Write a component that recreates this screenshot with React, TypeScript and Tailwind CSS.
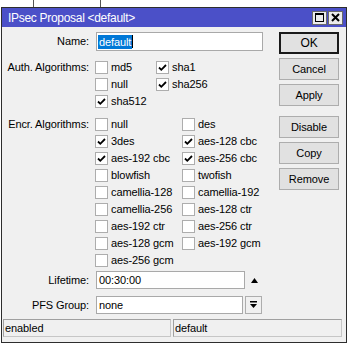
import React from "react";

const auth: [string, boolean][] = [
  ["md5", false],
  ["sha1", true],
  ["null", false],
  ["sha256", true],
  ["sha512", true],
];

const encr: [string, boolean][] = [
  ["null", false],
  ["des", false],
  ["3des", true],
  ["aes-128 cbc", true],
  ["aes-192 cbc", true],
  ["aes-256 cbc", true],
  ["blowfish", false],
  ["twofish", false],
  ["camellia-128", false],
  ["camellia-192", false],
  ["camellia-256", false],
  ["aes-128 ctr", false],
  ["aes-192 ctr", false],
  ["aes-256 ctr", false],
  ["aes-128 gcm", false],
  ["aes-192 gcm", false],
  ["aes-256 gcm", false],
];

const Check = ({ label, checked }: { label: string; checked: boolean }) => (
  <div className="flex items-center h-[17px]">
    <span className="w-[13px] h-[13px] border border-[#adadad] bg-white flex items-center justify-center shrink-0">
      {checked && (
        <svg width="11" height="11" viewBox="0 0 11 11">
          <path d="M2 5.5 L4.3 7.8 L9 3" fill="none" stroke="#000" strokeWidth="1.8" />
        </svg>
      )}
    </span>
    <span className="ml-[3px] whitespace-nowrap">{label}</span>
  </div>
);

const Btn = ({ children, def }: { children: React.ReactNode; def?: boolean }) => (
  <div
    className={
      "h-[22px] w-[60px] flex items-center justify-center bg-[#e1e1e1] " +
      (def ? "border-2 border-[#1a1a1a]" : "border border-[#adadad]")
    }
  >
    {children}
  </div>
);

const Label = ({ children }: { children: React.ReactNode }) => (
  <div className="w-[88px] text-right pr-[1px] shrink-0">{children}</div>
);

export default function App() {
  return (
    <div className="w-[350px] h-[345px] bg-white relative overflow-hidden font-['Liberation_Sans',Arial,sans-serif] text-[11px] text-black tracking-[-0.1px]">
      <div className="absolute left-[33px] top-0 w-px h-[7px] bg-[#555]" />
      <div className="absolute left-[100px] top-0 w-px h-[7px] bg-[#555]" />
      <div className="absolute left-[1px] top-[7px] w-[346px] h-[336px] border border-[#2d2d2d] bg-[#f0f0f0] flex flex-col">
        {/* title bar */}
        <div className="h-[19px] bg-[#4b50c8] flex items-center pl-[6px] pr-[3px] shrink-0">
          <span className="text-white text-[12px] tracking-[-0.3px]">IPsec Proposal &lt;default&gt;</span>
          <div className="ml-auto flex gap-[1px]">
            <div className="w-[15px] h-[14px] bg-[#ececec] border border-[#6a6a6a] flex items-center justify-center">
              <svg width="9" height="9" viewBox="0 0 9 9">
                <rect x="0.5" y="0.5" width="8" height="8" fill="none" stroke="#000" />
                <rect x="0" y="0" width="9" height="2" fill="#000" />
              </svg>
            </div>
            <div className="w-[15px] h-[14px] bg-[#ececec] border border-[#6a6a6a] flex items-center justify-center">
              <svg width="9" height="9" viewBox="0 0 9 9">
                <path d="M1 1 L8 8 M8 1 L1 8" stroke="#000" strokeWidth="2" />
              </svg>
            </div>
          </div>
        </div>

        {/* body */}
        <div className="flex flex-1">
          <div className="flex flex-col w-[276px] pt-[5px]">
            <div className="flex items-center h-[19px]">
              <Label>Name:</Label>
              <div className="ml-[6px] w-[167px] h-[19px] border border-[#a9a9a9] bg-white flex items-center pl-[1px]">
                <span className="bg-[#0078d7] text-white px-[1px] leading-[14px]">default</span>
                <span className="w-px h-[13px] bg-black" />
              </div>
            </div>

            <div className="flex mt-[8px]">
              <Label>
                <div className="h-[17px] flex items-center justify-end">Auth. Algorithms:</div>
              </Label>
              <div className="ml-[5px] grid grid-cols-[61px_auto]">
                {auth.map(([l, c], i) => (
                  <Check key={i} label={l} checked={c} />
                ))}
              </div>
            </div>

            <div className="flex mt-[6px]">
              <Label>
                <div className="h-[17px] flex items-center justify-end">Encr. Algorithms:</div>
              </Label>
              <div className="ml-[5px] grid grid-cols-[87px_auto]">
                {encr.map(([l, c], i) => (
                  <Check key={i} label={l} checked={c} />
                ))}
              </div>
            </div>

            <div className="flex items-center h-[18px] mt-[2px]">
              <Label>Lifetime:</Label>
              <div className="ml-[6px] w-[149px] h-[18px] border border-[#a9a9a9] bg-white flex items-center pl-[2px]">
                00:30:00
              </div>
              <svg className="ml-[6px]" width="7" height="5" viewBox="0 0 7 5">
                <path d="M3.5 0 L7 5 L0 5 Z" fill="#000" />
              </svg>
            </div>

            <div className="flex items-center h-[18px] mt-[7px]">
              <Label>PFS Group:</Label>
              <div className="ml-[6px] w-[147px] h-[18px] border border-[#a9a9a9] bg-white flex items-center pl-[2px]">
                none
              </div>
              <div className="ml-[2px] w-[17px] h-[18px] border border-[#adadad] bg-[#f0f0f0] flex items-center justify-center">
                <svg width="9" height="8" viewBox="0 0 9 8">
                  <rect x="1" y="0" width="7" height="1.5" fill="#000" />
                  <path d="M1 3 L8 3 L4.5 7 Z" fill="#000" />
                </svg>
              </div>
            </div>
          </div>

          <div className="flex flex-col pt-[5px] ml-[1px]">
            <Btn def>
              <span className="text-[12px]">OK</span>
            </Btn>
            <div className="flex flex-col gap-[4px] mt-[4px]">
              <Btn>Cancel</Btn>
              <Btn>Apply</Btn>
            </div>
            <div className="flex flex-col gap-[4px] mt-[10px]">
              <Btn>Disable</Btn>
              <Btn>Copy</Btn>
              <Btn>Remove</Btn>
            </div>
          </div>
        </div>

        {/* status bar */}
        <div className="flex h-[18px] mx-[1px] mb-[5px] gap-[2px] shrink-0">
          <div className="w-[168px] border border-[#c6c6c6] border-t-[#a0a0a0] border-l-[#a0a0a0] flex items-center pl-[1px]">
            enabled
          </div>
          <div className="w-[169px] border border-[#c6c6c6] border-t-[#a0a0a0] border-l-[#a0a0a0] flex items-center pl-[1px]">
            default
          </div>
        </div>
      </div>
    </div>
  );
}
